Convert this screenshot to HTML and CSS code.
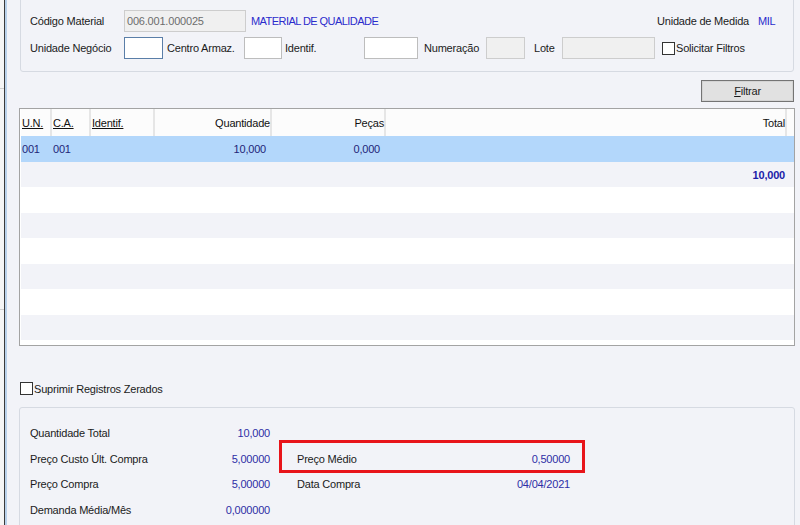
FILE: index.html
```html
<!DOCTYPE html>
<html lang="pt-BR">
<head>
<meta charset="utf-8">
<title>Consulta de Estoque</title>
<link rel="stylesheet" href="styles.css">
</head>
<body>
<div class="app">
  <div class="edge"></div>
  <div class="main">
    <div class="content">
      <section class="panel top-panel">
        <div class="frow">
          <span class="lbl w94">Código Material</span>
          <span class="inp dis w122">006.001.000025</span>
          <span class="desc">MATERIAL DE QUALIDADE</span>
          <span class="uom"><span class="lbl w101">Unidade de Medida</span><span class="val">MIL</span></span>
        </div>
        <div class="frow">
          <span class="lbl w94">Unidade Negócio</span>
          <span class="inp focus w39"></span>
          <span class="lbl ml4 w77">Centro Armaz.</span>
          <span class="inp w38"></span>
          <span class="lbl ml3 w79">Identif.</span>
          <span class="inp w54"></span>
          <span class="lbl ml6 w62">Numeração</span>
          <span class="inp dis w39"></span>
          <span class="lbl ml9 w28">Lote</span>
          <span class="inp dis w93"></span>
          <span class="chk ml7"></span><span class="lbl">Solicitar Filtros</span>
        </div>
      </section>

      <div class="btn-row">
        <button class="btn" type="button"><u>F</u>iltrar</button>
      </div>

      <div class="grid">
        <div class="grow ghead">
          <div class="hc ul">U.N.</div>
          <div class="hc ul">C.A.</div>
          <div class="hc ul">Identif.</div>
          <div class="hc r">Quantidade</div>
          <div class="hc r">Peças</div>
          <div class="hc r">Total</div>
          <div class="hc last"></div>
        </div>
        <div class="grow row sel h26">
          <div class="c">001</div>
          <div class="c">001</div>
          <div class="c"></div>
          <div class="c r">10,000</div>
          <div class="c r">0,000</div>
          <div class="c r"></div>
          <div class="c"></div>
        </div>
        <div class="grow row alt h25">
          <div class="c"></div><div class="c"></div><div class="c"></div>
          <div class="c"></div><div class="c"></div>
          <div class="c r tot">10,000</div>
          <div class="c"></div>
        </div>
        <div class="row h26"></div>
        <div class="row alt h25"></div>
        <div class="row h26"></div>
        <div class="row alt h25"></div>
        <div class="row h26"></div>
        <div class="row alt h25"></div>
      </div>

      <div class="sup-row">
        <span class="chk"></span><span class="lbl">Suprimir Registros Zerados</span>
      </div>

      <section class="panel bottom-panel">
        <div class="srow h26">
          <span class="l1">Quantidade Total</span><span class="v1">10,000</span>
          <span class="pair"></span>
        </div>
        <div class="srow h25">
          <span class="l1">Preço Custo Últ. Compra</span><span class="v1">5,00000</span>
          <span class="pair hl"><span class="l2">Preço Médio</span><span class="v2">0,50000</span></span>
        </div>
        <div class="srow h26">
          <span class="l1">Preço Compra</span><span class="v1">5,00000</span>
          <span class="pair"><span class="l2">Data Compra</span><span class="v2">04/04/2021</span></span>
        </div>
        <div class="srow h25">
          <span class="l1">Demanda Média/Mês</span><span class="v1">0,000000</span>
          <span class="pair"></span>
        </div>
      </section>
    </div>
  </div>
</div>
</body>
</html>
```

FILE: styles.css
```css
* { box-sizing: border-box; }
html, body { margin: 0; padding: 0; }
body {
  width: 800px;
  height: 525px;
  overflow: hidden;
  background: #f2f3f8;
  font-family: "Liberation Sans", Arial, sans-serif;
  font-size: 11px;
  letter-spacing: -0.2px;
  color: #1b1b1b;
}
.app { display: flex; height: 525px; overflow: hidden; }
.edge {
  width: 4px;
  flex-shrink: 0;
  background: linear-gradient(#f5f5f5 0 88px, #cfcfcf 88px 89px, #f5f5f5 89px 309px, #cfcfcf 309px 310px, #f5f5f5 310px);
}
.main { flex: 1; display: flex; border-left: 1px solid #3a3a3a; min-width: 0; overflow: hidden; }
.content {
  flex: 1;
  min-width: 0;
  border-left: 2px solid #b9d1ea;
  padding: 0 6px 0 13px;
  display: flex;
  flex-direction: column;
  overflow: hidden;
}

.panel { border: 1px solid #d6dae2; border-radius: 3px; }

/* top filter panel */
.top-panel {
  margin-top: -6px;
  padding: 15px 0 12px 9px;
  display: flex;
  flex-direction: column;
  gap: 5px;
  flex-shrink: 0;
}
.frow { display: flex; align-items: center; height: 22px; }
.lbl { flex-shrink: 0; white-space: nowrap; }
.inp {
  flex-shrink: 0;
  height: 22px;
  border: 1px solid #bdbdbd;
  background: #fff;
  display: flex;
  align-items: center;
  padding-left: 2px;
}
.inp.dis { background: #f0f0f0; border-color: #cdcdcd; color: #6d6d6d; }
.inp.focus { border-color: #5a7ea8; }
.desc { margin-left: 5px; color: #2b2bcc; letter-spacing: -0.55px; white-space: nowrap; }
.uom { margin-left: auto; width: 136px; display: flex; flex-shrink: 0; }
.val { color: #2b2bcc; letter-spacing: -0.4px; }

.w28 { width: 28px; } .w38 { width: 38px; } .w39 { width: 39px; }
.w54 { width: 54px; } .w62 { width: 62px; } .w77 { width: 77px; } .w79 { width: 79px; }
.w93 { width: 93px; } .w94 { width: 94px; } .w101 { width: 101px; } .w122 { width: 122px; }
.ml3 { margin-left: 3px; } .ml4 { margin-left: 4px; } .ml6 { margin-left: 6px; }
.ml7 { margin-left: 7px; } .ml9 { margin-left: 9px; }

.chk {
  flex-shrink: 0;
  width: 13px;
  height: 13px;
  border: 1px solid #333;
  background: #fff;
  margin-right: 1px;
}

/* button */
.btn-row { display: flex; justify-content: flex-end; margin-top: 8px; flex-shrink: 0; }
.btn {
  width: 93px;
  height: 22px;
  margin: 0;
  padding: 0;
  border: 1px solid #747474;
  box-shadow: inset 0 0 0 1px #d4d4d4;
  background: #e1e1e1;
  font: inherit;
  letter-spacing: inherit;
  color: #1b1b1b;
}
.btn u { text-decoration: underline; }

/* grid */
.grid {
  margin: 6px -1px 0 -1px;
  border: 1px solid #a3a3a3;
  background: #fff;
  padding: 0 0 5px 1px;
  display: flex;
  flex-direction: column;
  flex-shrink: 0;
}
.grow {
  display: grid;
  grid-template-columns: 31px 39px 64px 117px 114px 401px 1fr;
}
.ghead { height: 27px; background: #fcfcfc; }
.hc {
  border-right: 2px solid #e6e6e6;
  padding: 0 0 0 1px;
  display: flex;
  align-items: center;
  color: #111;
  white-space: nowrap;
}
.hc.last { border-right: 0; }
.hc.ul { text-decoration: underline; }
.hc.r { justify-content: flex-end; padding: 0; }
.row { background: #fff; }
.row.alt { background: #f2f3f8; }
.row.sel { background: #b3d7fb; }
.h25 { height: 25px; }
.h26 { height: 26px; }
.c {
  display: flex;
  align-items: center;
  padding-left: 1px;
  color: #1f1f78;
  white-space: nowrap;
}
.c.r { justify-content: flex-end; padding: 0 6px 0 0; }
.c.tot { font-weight: bold; color: #1c1ca8; padding-right: 2px; }

/* suppress checkbox */
.sup-row { display: flex; align-items: center; height: 13px; margin-top: 36px; flex-shrink: 0; }

/* bottom summary */
.bottom-panel {
  margin: 12px -1px 0 -1px;
  padding: 12px 0 30px 10px;
  flex-shrink: 0;
}
.srow { display: flex; align-items: center; }
.l1 { width: 170px; flex-shrink: 0; white-space: nowrap; }
.v1 { width: 70px; flex-shrink: 0; text-align: right; color: #2e2ea6; }
.pair {
  margin-left: 27px;
  width: 273px;
  flex-shrink: 0;
  align-self: stretch;
  display: flex;
  align-items: center;
  position: relative;
}
.l2 { white-space: nowrap; }
.v2 { margin-left: auto; color: #2e2ea6; }
.pair.hl::after {
  content: "";
  position: absolute;
  left: -18px;
  right: -15px;
  top: -6px;
  bottom: -2px;
  border: 3px solid #e8141a;
}
```
